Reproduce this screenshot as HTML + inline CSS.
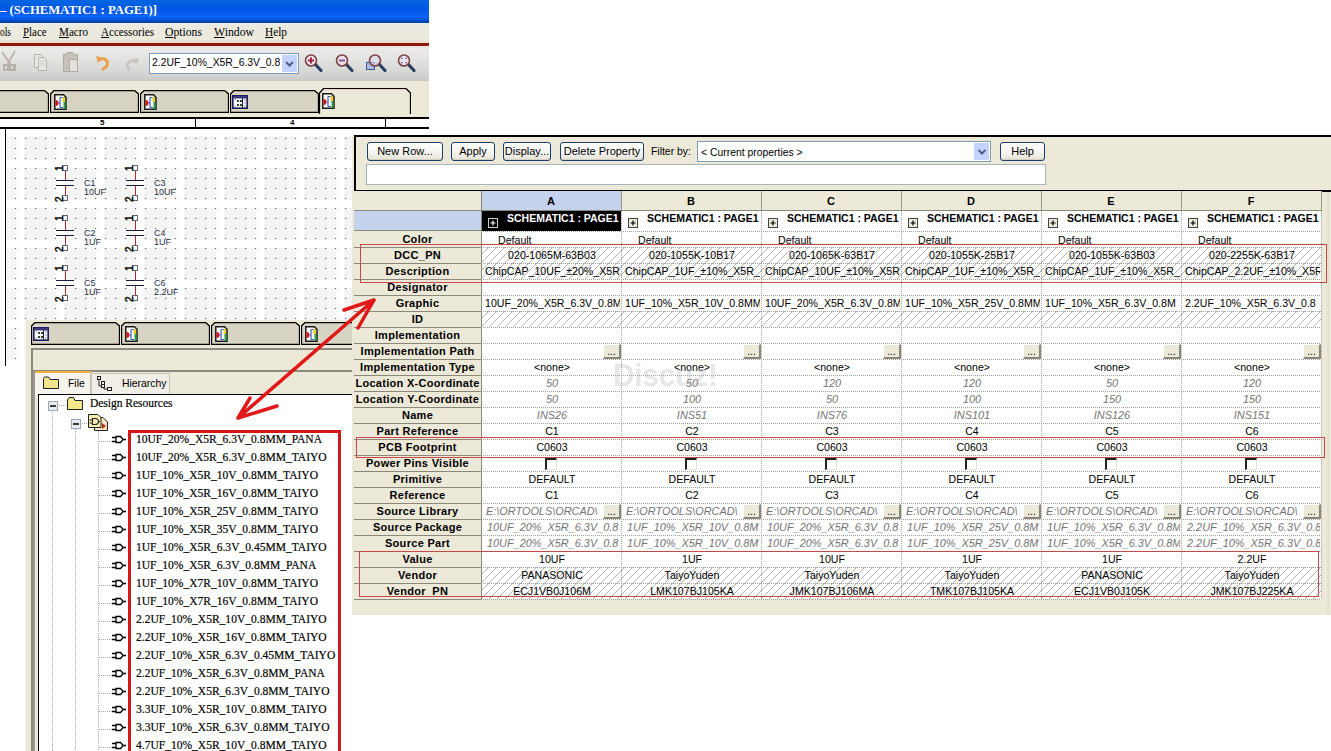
<!DOCTYPE html><html><head><meta charset="utf-8"><style>
*{margin:0;padding:0;box-sizing:border-box}
html,body{width:1331px;height:751px;overflow:hidden;background:#fff;position:relative;font-family:"Liberation Sans",sans-serif}
.ab{position:absolute}
.t{position:absolute;white-space:nowrap}
</style></head><body>

<div class="ab" style="left:0;top:0;width:429px;height:23px;background:linear-gradient(#0466e2 0%,#0055e4 45%,#0a64f8 72%,#0058e2 84%,#0046b4 94%,#003a90 100%)"></div>
<div class="t" style="left:0;top:2px;font:bold 13px 'Liberation Serif', serif;color:#fff;transform:scaleX(0.976);transform-origin:0 0">– (SCHEMATIC1 : PAGE1)]</div>
<div class="ab" style="left:0;top:23px;width:429px;height:20px;background:linear-gradient(#eef2f6 0,#eceae0 2px,#ece9dc 100%)"></div>
<div class="t" style="left:0px;top:25px;font:12px 'Liberation Serif', serif;color:#000;transform:scaleX(0.7857142857142857);transform-origin:0 0">ols</div>
<div class="t" style="left:23px;top:25px;font:12px 'Liberation Serif', serif;color:#000;transform:scaleX(0.9041939207387457);transform-origin:0 0"><u>P</u>lace</div>
<div class="t" style="left:59px;top:25px;font:12px 'Liberation Serif', serif;color:#000;transform:scaleX(0.9259259259259259);transform-origin:0 0"><u>M</u>acro</div>
<div class="t" style="left:101px;top:25px;font:12px 'Liberation Serif', serif;color:#000;transform:scaleX(0.9247949746990054);transform-origin:0 0"><u>A</u>ccessories</div>
<div class="t" style="left:165px;top:25px;font:12px 'Liberation Serif', serif;color:#000;transform:scaleX(0.9736842105263158);transform-origin:0 0"><u>O</u>ptions</div>
<div class="t" style="left:214px;top:25px;font:12px 'Liberation Serif', serif;color:#000;transform:scaleX(0.9791921664626683);transform-origin:0 0"><u>W</u>indow</div>
<div class="t" style="left:265px;top:25px;font:12px 'Liberation Serif', serif;color:#000;transform:scaleX(0.9429918559794257);transform-origin:0 0"><u>H</u>elp</div>
<div class="ab" style="left:0;top:40px;width:429px;height:3px;background:linear-gradient(#ede6dc,#f2d8d4)"></div>
<div class="ab" style="left:0;top:43px;width:429px;height:3px;background:#8a1a0c"></div>
<div class="ab" style="left:0;top:46px;width:429px;height:35px;background:linear-gradient(#f6dede 0%,#ecebea 6%,#e2e2e0 40%,#d6d6d4 75%,#c8c8c6 100%)"></div>
<div class="ab" style="left:149px;top:53px;width:150px;height:21px;background:#fff;border:1px solid #7f9db9"></div>
<div class="t" style="left:152px;top:55px;width:128px;overflow:hidden;font:10.4px/16px 'Liberation Sans', sans-serif;color:#000">2.2UF_10%_X5R_6.3V_0.8MM</div>
<div class="ab" style="left:282px;top:55px;width:15px;height:17px;background:#c3d3fd"></div>
<svg class="ab" style="left:282px;top:55px" width="15" height="17"><path d="M4 7 L7.5 10.5 L11 7" stroke="#4d6185" stroke-width="2" fill="none"/></svg>
<svg class="ab" style="left:0;top:50px" width="429" height="28"><path d="M2 2 L11 15 M15 1 L7 15" stroke="#b6b2aa" stroke-width="1.6" fill="none"/><path d="M3 14 H9 V21 H3Z M9 14 H16 V21 H9Z" fill="#b6b2aa"/><path d="M5 16 H7 V19 H5Z M11 16 H13 V19 H11Z" fill="#d8d6d0"/><path d="M34.5 4.5 H40.5 L42.5 6.5 V17.5 H34.5Z" fill="#e8e7e4" stroke="#b8b4ac"/><path d="M38.5 7.5 H44.5 L46.5 9.5 V20.5 H38.5Z" fill="#e8e7e4" stroke="#b8b4ac"/><path d="M40 11 H45 M40 13 H45 M40 15 H45" stroke="#d0cec8"/><path d="M63.5 4.5 H66 L67 2.5 H73 L74 4.5 H77.5 V21.5 H63.5Z" fill="#c6c2ba" stroke="#aeaaa2"/><path d="M69.5 9.5 H75.5 L77.5 11.5 V21.5 H69.5Z" fill="#e4e2de" stroke="#aeaaa2"/><path d="M99 10 Q104 7 107 11 Q109 16 103 19" stroke="#e8a050" stroke-width="3" fill="none" stroke-linecap="round"/><path d="M96 6 L103 8 L98 13Z" fill="#e8a050"/><path d="M136 12 Q131 9 128 13 Q126 17 129 19" stroke="#c8c6c0" stroke-width="3" fill="none" stroke-linecap="round"/><path d="M139 8 L133 9 L137 14Z" fill="#c8c6c0"/><path d="M315 14 L321 20.5" stroke="#2a4060" stroke-width="3.2" stroke-linecap="round"/><circle cx="311" cy="10.5" r="5.5" fill="#f2e6ee" stroke="#7a4444" stroke-width="1.6"/><path d="M308 10.5 H314 M311 7.5 V13.5" stroke="#a82040" stroke-width="2"/><path d="M346 14 L352 20.5" stroke="#2a4060" stroke-width="3.2" stroke-linecap="round"/><circle cx="342" cy="10.5" r="5.5" fill="#ece0ec" stroke="#7a4444" stroke-width="1.6"/><path d="M339 10.5 H345" stroke="#8a5a90" stroke-width="2"/><path d="M379 14 L385 20.5" stroke="#2a4060" stroke-width="3.2" stroke-linecap="round"/><rect x="366.5" y="12.5" width="8" height="7" fill="#a8bde0" stroke="#3a5a90"/><circle cx="375" cy="10.5" r="5.5" fill="rgba(220,220,240,0.6)" stroke="#7a4444" stroke-width="1.6"/><path d="M408 14 L414 20.5" stroke="#2a4060" stroke-width="3.2" stroke-linecap="round"/><circle cx="404" cy="10.5" r="5.5" fill="#ece2ee" stroke="#7a4444" stroke-width="1.6"/><path d="M401.5 9 V8 H402.5 M405.5 8 H406.5 V9 M406.5 12 V13 H405.5 M402.5 13 H401.5 V12" stroke="#6a5aa0" stroke-width="1"/></svg>
<div class="ab" style="left:0;top:81px;width:429px;height:36px;background:#ece9d8"></div>
<svg class="ab" style="left:-40px;top:90px" width="89" height="23"><path d="M0.5 22.5 V4 L4 0.5 H84.5 L88.5 4 V22.5Z" fill="#d8d4c4" stroke="#000" stroke-width="1.3"/></svg>
<svg class="ab" style="left:50px;top:90px" width="89" height="23"><path d="M0.5 22.5 V4 L4 0.5 H84.5 L88.5 4 V22.5Z" fill="#d8d4c4" stroke="#000" stroke-width="1.3"/></svg>
<svg class="ab" style="left:54px;top:94px" width="13" height="16"><path d="M0.8 0.8 H9.5 L12 3.3 V15.2 H0.8Z" fill="#fff" stroke="#1a1a1a" stroke-width="1.5"/><path d="M1.5 6 A3 3 0 0 1 1.5 12 Z" fill="#d81010"/><path d="M4.5 9 H6 M6 3.5 V13.5 M6 3.5 H9 M6 13.5 H9" stroke="#3a5ac8" stroke-width="1.2" fill="none"/><rect x="8.5" y="3" width="2.5" height="5" fill="#e8d020"/><rect x="9.5" y="8" width="2" height="7" fill="#20a040"/></svg>
<svg class="ab" style="left:140px;top:90px" width="89" height="23"><path d="M0.5 22.5 V4 L4 0.5 H84.5 L88.5 4 V22.5Z" fill="#d8d4c4" stroke="#000" stroke-width="1.3"/></svg>
<svg class="ab" style="left:144px;top:94px" width="13" height="16"><path d="M0.8 0.8 H9.5 L12 3.3 V15.2 H0.8Z" fill="#fff" stroke="#1a1a1a" stroke-width="1.5"/><path d="M1.5 6 A3 3 0 0 1 1.5 12 Z" fill="#d81010"/><path d="M4.5 9 H6 M6 3.5 V13.5 M6 3.5 H9 M6 13.5 H9" stroke="#3a5ac8" stroke-width="1.2" fill="none"/><rect x="8.5" y="3" width="2.5" height="5" fill="#e8d020"/><rect x="9.5" y="8" width="2" height="7" fill="#20a040"/></svg>
<svg class="ab" style="left:230px;top:90px" width="89" height="23"><path d="M0.5 22.5 V4 L4 0.5 H84.5 L88.5 4 V22.5Z" fill="#d8d4c4" stroke="#000" stroke-width="1.3"/></svg>
<svg class="ab" style="left:232px;top:95px" width="16" height="14"><rect x="0.8" y="0.8" width="14.4" height="12.4" fill="#fff" stroke="#1c1c5a" stroke-width="1.6"/><rect x="1" y="1" width="14" height="2.5" fill="#3a3a7a"/><path d="M10.5 3 V13" stroke="#1c1c5a"/><rect x="5" y="5" width="2" height="2" fill="#2a4a2a"/><rect x="5" y="9" width="2" height="2" fill="#2a4a2a"/><rect x="8" y="5" width="2" height="2" fill="#2a4a2a"/><rect x="8" y="9" width="2" height="2" fill="#2a4a2a"/><path d="M2.5 5 H4 M2.5 11 H4 M12 5 H14 M12 8 H14 M12 11 H14" stroke="#9090a0"/></svg>
<svg class="ab" style="left:319px;top:88px" width="92" height="26"><path d="M0.5 26 V5 L4.5 0.5 H87 L91.5 5 V26" fill="#ece9d8" stroke="#000" stroke-width="1.3"/><path d="M5 1.5 H87" stroke="#f4c8c0"/></svg>
<svg class="ab" style="left:322px;top:93px" width="13" height="16"><path d="M0.8 0.8 H9.5 L12 3.3 V15.2 H0.8Z" fill="#fff" stroke="#1a1a1a" stroke-width="1.5"/><path d="M1.5 6 A3 3 0 0 1 1.5 12 Z" fill="#d81010"/><path d="M4.5 9 H6 M6 3.5 V13.5 M6 3.5 H9 M6 13.5 H9" stroke="#3a5ac8" stroke-width="1.2" fill="none"/><rect x="8.5" y="3" width="2.5" height="5" fill="#e8d020"/><rect x="9.5" y="8" width="2" height="7" fill="#20a040"/></svg>
<div class="ab" style="left:0;top:117px;width:429px;height:2px;background:#000"></div>
<div class="ab" style="left:0;top:119px;width:429px;height:9px;background:#fff"></div>
<div class="ab" style="left:0;top:127px;width:429px;height:2px;background:#000"></div>
<div class="ab" style="left:195px;top:119px;width:1px;height:9px;background:#000"></div>
<div class="ab" style="left:385px;top:119px;width:1px;height:9px;background:#000"></div>
<div class="t" style="left:100px;top:118px;font:bold 8px 'Liberation Sans', sans-serif">5</div>
<div class="t" style="left:290px;top:118px;font:bold 8px 'Liberation Sans', sans-serif">4</div>
<div class="ab" style="left:5px;top:129px;width:1px;height:237px;background:#000"></div>
<svg class="ab" style="left:6px;top:129px" width="354" height="237"><defs><pattern id="jp" patternUnits="userSpaceOnUse" x="10" y="31" width="40" height="40"><rect x="8" y="8" width="32" height="32" fill="#f5f5f5"/></pattern></defs><rect x="0" y="7" width="354" height="230" fill="url(#jp)"/></svg>
<svg class="ab" style="left:0;top:0" width="360" height="370"><path d="M15 138.5h1.2M15 148.5h1.2M15 158.5h1.2M15 168.5h1.2M15 178.5h1.2M15 188.5h1.2M15 198.5h1.2M15 208.5h1.2M15 218.5h1.2M15 228.5h1.2M15 238.5h1.2M15 248.5h1.2M15 258.5h1.2M15 268.5h1.2M15 278.5h1.2M15 288.5h1.2M15 298.5h1.2M15 308.5h1.2M15 318.5h1.2M15 328.5h1.2M15 338.5h1.2M15 348.5h1.2M15 358.5h1.2M25 138.5h1.2M25 148.5h1.2M25 158.5h1.2M25 168.5h1.2M25 178.5h1.2M25 188.5h1.2M25 198.5h1.2M25 208.5h1.2M25 218.5h1.2M25 228.5h1.2M25 238.5h1.2M25 248.5h1.2M25 258.5h1.2M25 268.5h1.2M25 278.5h1.2M25 288.5h1.2M25 298.5h1.2M25 308.5h1.2M25 318.5h1.2M25 328.5h1.2M25 338.5h1.2M25 348.5h1.2M25 358.5h1.2M35 138.5h1.2M35 148.5h1.2M35 158.5h1.2M35 168.5h1.2M35 178.5h1.2M35 188.5h1.2M35 198.5h1.2M35 208.5h1.2M35 218.5h1.2M35 228.5h1.2M35 238.5h1.2M35 248.5h1.2M35 258.5h1.2M35 268.5h1.2M35 278.5h1.2M35 288.5h1.2M35 298.5h1.2M35 308.5h1.2M35 318.5h1.2M35 328.5h1.2M35 338.5h1.2M35 348.5h1.2M35 358.5h1.2M45 138.5h1.2M45 148.5h1.2M45 158.5h1.2M45 168.5h1.2M45 178.5h1.2M45 188.5h1.2M45 198.5h1.2M45 208.5h1.2M45 218.5h1.2M45 228.5h1.2M45 238.5h1.2M45 248.5h1.2M45 258.5h1.2M45 268.5h1.2M45 278.5h1.2M45 288.5h1.2M45 298.5h1.2M45 308.5h1.2M45 318.5h1.2M45 328.5h1.2M45 338.5h1.2M45 348.5h1.2M45 358.5h1.2M55 138.5h1.2M55 148.5h1.2M55 158.5h1.2M55 168.5h1.2M55 178.5h1.2M55 188.5h1.2M55 198.5h1.2M55 208.5h1.2M55 218.5h1.2M55 228.5h1.2M55 238.5h1.2M55 248.5h1.2M55 258.5h1.2M55 268.5h1.2M55 278.5h1.2M55 288.5h1.2M55 298.5h1.2M55 308.5h1.2M55 318.5h1.2M55 328.5h1.2M55 338.5h1.2M55 348.5h1.2M55 358.5h1.2M65 138.5h1.2M65 148.5h1.2M65 158.5h1.2M65 168.5h1.2M65 178.5h1.2M65 188.5h1.2M65 198.5h1.2M65 208.5h1.2M65 218.5h1.2M65 228.5h1.2M65 238.5h1.2M65 248.5h1.2M65 258.5h1.2M65 268.5h1.2M65 278.5h1.2M65 288.5h1.2M65 298.5h1.2M65 308.5h1.2M65 318.5h1.2M65 328.5h1.2M65 338.5h1.2M65 348.5h1.2M65 358.5h1.2M75 138.5h1.2M75 148.5h1.2M75 158.5h1.2M75 168.5h1.2M75 178.5h1.2M75 188.5h1.2M75 198.5h1.2M75 208.5h1.2M75 218.5h1.2M75 228.5h1.2M75 238.5h1.2M75 248.5h1.2M75 258.5h1.2M75 268.5h1.2M75 278.5h1.2M75 288.5h1.2M75 298.5h1.2M75 308.5h1.2M75 318.5h1.2M75 328.5h1.2M75 338.5h1.2M75 348.5h1.2M75 358.5h1.2M85 138.5h1.2M85 148.5h1.2M85 158.5h1.2M85 168.5h1.2M85 178.5h1.2M85 188.5h1.2M85 198.5h1.2M85 208.5h1.2M85 218.5h1.2M85 228.5h1.2M85 238.5h1.2M85 248.5h1.2M85 258.5h1.2M85 268.5h1.2M85 278.5h1.2M85 288.5h1.2M85 298.5h1.2M85 308.5h1.2M85 318.5h1.2M85 328.5h1.2M85 338.5h1.2M85 348.5h1.2M85 358.5h1.2M95 138.5h1.2M95 148.5h1.2M95 158.5h1.2M95 168.5h1.2M95 178.5h1.2M95 188.5h1.2M95 198.5h1.2M95 208.5h1.2M95 218.5h1.2M95 228.5h1.2M95 238.5h1.2M95 248.5h1.2M95 258.5h1.2M95 268.5h1.2M95 278.5h1.2M95 288.5h1.2M95 298.5h1.2M95 308.5h1.2M95 318.5h1.2M95 328.5h1.2M95 338.5h1.2M95 348.5h1.2M95 358.5h1.2M105 138.5h1.2M105 148.5h1.2M105 158.5h1.2M105 168.5h1.2M105 178.5h1.2M105 188.5h1.2M105 198.5h1.2M105 208.5h1.2M105 218.5h1.2M105 228.5h1.2M105 238.5h1.2M105 248.5h1.2M105 258.5h1.2M105 268.5h1.2M105 278.5h1.2M105 288.5h1.2M105 298.5h1.2M105 308.5h1.2M105 318.5h1.2M105 328.5h1.2M105 338.5h1.2M105 348.5h1.2M105 358.5h1.2M115 138.5h1.2M115 148.5h1.2M115 158.5h1.2M115 168.5h1.2M115 178.5h1.2M115 188.5h1.2M115 198.5h1.2M115 208.5h1.2M115 218.5h1.2M115 228.5h1.2M115 238.5h1.2M115 248.5h1.2M115 258.5h1.2M115 268.5h1.2M115 278.5h1.2M115 288.5h1.2M115 298.5h1.2M115 308.5h1.2M115 318.5h1.2M115 328.5h1.2M115 338.5h1.2M115 348.5h1.2M115 358.5h1.2M125 138.5h1.2M125 148.5h1.2M125 158.5h1.2M125 168.5h1.2M125 178.5h1.2M125 188.5h1.2M125 198.5h1.2M125 208.5h1.2M125 218.5h1.2M125 228.5h1.2M125 238.5h1.2M125 248.5h1.2M125 258.5h1.2M125 268.5h1.2M125 278.5h1.2M125 288.5h1.2M125 298.5h1.2M125 308.5h1.2M125 318.5h1.2M125 328.5h1.2M125 338.5h1.2M125 348.5h1.2M125 358.5h1.2M135 138.5h1.2M135 148.5h1.2M135 158.5h1.2M135 168.5h1.2M135 178.5h1.2M135 188.5h1.2M135 198.5h1.2M135 208.5h1.2M135 218.5h1.2M135 228.5h1.2M135 238.5h1.2M135 248.5h1.2M135 258.5h1.2M135 268.5h1.2M135 278.5h1.2M135 288.5h1.2M135 298.5h1.2M135 308.5h1.2M135 318.5h1.2M135 328.5h1.2M135 338.5h1.2M135 348.5h1.2M135 358.5h1.2M145 138.5h1.2M145 148.5h1.2M145 158.5h1.2M145 168.5h1.2M145 178.5h1.2M145 188.5h1.2M145 198.5h1.2M145 208.5h1.2M145 218.5h1.2M145 228.5h1.2M145 238.5h1.2M145 248.5h1.2M145 258.5h1.2M145 268.5h1.2M145 278.5h1.2M145 288.5h1.2M145 298.5h1.2M145 308.5h1.2M145 318.5h1.2M145 328.5h1.2M145 338.5h1.2M145 348.5h1.2M145 358.5h1.2M155 138.5h1.2M155 148.5h1.2M155 158.5h1.2M155 168.5h1.2M155 178.5h1.2M155 188.5h1.2M155 198.5h1.2M155 208.5h1.2M155 218.5h1.2M155 228.5h1.2M155 238.5h1.2M155 248.5h1.2M155 258.5h1.2M155 268.5h1.2M155 278.5h1.2M155 288.5h1.2M155 298.5h1.2M155 308.5h1.2M155 318.5h1.2M155 328.5h1.2M155 338.5h1.2M155 348.5h1.2M155 358.5h1.2M165 138.5h1.2M165 148.5h1.2M165 158.5h1.2M165 168.5h1.2M165 178.5h1.2M165 188.5h1.2M165 198.5h1.2M165 208.5h1.2M165 218.5h1.2M165 228.5h1.2M165 238.5h1.2M165 248.5h1.2M165 258.5h1.2M165 268.5h1.2M165 278.5h1.2M165 288.5h1.2M165 298.5h1.2M165 308.5h1.2M165 318.5h1.2M165 328.5h1.2M165 338.5h1.2M165 348.5h1.2M165 358.5h1.2M175 138.5h1.2M175 148.5h1.2M175 158.5h1.2M175 168.5h1.2M175 178.5h1.2M175 188.5h1.2M175 198.5h1.2M175 208.5h1.2M175 218.5h1.2M175 228.5h1.2M175 238.5h1.2M175 248.5h1.2M175 258.5h1.2M175 268.5h1.2M175 278.5h1.2M175 288.5h1.2M175 298.5h1.2M175 308.5h1.2M175 318.5h1.2M175 328.5h1.2M175 338.5h1.2M175 348.5h1.2M175 358.5h1.2M185 138.5h1.2M185 148.5h1.2M185 158.5h1.2M185 168.5h1.2M185 178.5h1.2M185 188.5h1.2M185 198.5h1.2M185 208.5h1.2M185 218.5h1.2M185 228.5h1.2M185 238.5h1.2M185 248.5h1.2M185 258.5h1.2M185 268.5h1.2M185 278.5h1.2M185 288.5h1.2M185 298.5h1.2M185 308.5h1.2M185 318.5h1.2M185 328.5h1.2M185 338.5h1.2M185 348.5h1.2M185 358.5h1.2M195 138.5h1.2M195 148.5h1.2M195 158.5h1.2M195 168.5h1.2M195 178.5h1.2M195 188.5h1.2M195 198.5h1.2M195 208.5h1.2M195 218.5h1.2M195 228.5h1.2M195 238.5h1.2M195 248.5h1.2M195 258.5h1.2M195 268.5h1.2M195 278.5h1.2M195 288.5h1.2M195 298.5h1.2M195 308.5h1.2M195 318.5h1.2M195 328.5h1.2M195 338.5h1.2M195 348.5h1.2M195 358.5h1.2M205 138.5h1.2M205 148.5h1.2M205 158.5h1.2M205 168.5h1.2M205 178.5h1.2M205 188.5h1.2M205 198.5h1.2M205 208.5h1.2M205 218.5h1.2M205 228.5h1.2M205 238.5h1.2M205 248.5h1.2M205 258.5h1.2M205 268.5h1.2M205 278.5h1.2M205 288.5h1.2M205 298.5h1.2M205 308.5h1.2M205 318.5h1.2M205 328.5h1.2M205 338.5h1.2M205 348.5h1.2M205 358.5h1.2M215 138.5h1.2M215 148.5h1.2M215 158.5h1.2M215 168.5h1.2M215 178.5h1.2M215 188.5h1.2M215 198.5h1.2M215 208.5h1.2M215 218.5h1.2M215 228.5h1.2M215 238.5h1.2M215 248.5h1.2M215 258.5h1.2M215 268.5h1.2M215 278.5h1.2M215 288.5h1.2M215 298.5h1.2M215 308.5h1.2M215 318.5h1.2M215 328.5h1.2M215 338.5h1.2M215 348.5h1.2M215 358.5h1.2M225 138.5h1.2M225 148.5h1.2M225 158.5h1.2M225 168.5h1.2M225 178.5h1.2M225 188.5h1.2M225 198.5h1.2M225 208.5h1.2M225 218.5h1.2M225 228.5h1.2M225 238.5h1.2M225 248.5h1.2M225 258.5h1.2M225 268.5h1.2M225 278.5h1.2M225 288.5h1.2M225 298.5h1.2M225 308.5h1.2M225 318.5h1.2M225 328.5h1.2M225 338.5h1.2M225 348.5h1.2M225 358.5h1.2M235 138.5h1.2M235 148.5h1.2M235 158.5h1.2M235 168.5h1.2M235 178.5h1.2M235 188.5h1.2M235 198.5h1.2M235 208.5h1.2M235 218.5h1.2M235 228.5h1.2M235 238.5h1.2M235 248.5h1.2M235 258.5h1.2M235 268.5h1.2M235 278.5h1.2M235 288.5h1.2M235 298.5h1.2M235 308.5h1.2M235 318.5h1.2M235 328.5h1.2M235 338.5h1.2M235 348.5h1.2M235 358.5h1.2M245 138.5h1.2M245 148.5h1.2M245 158.5h1.2M245 168.5h1.2M245 178.5h1.2M245 188.5h1.2M245 198.5h1.2M245 208.5h1.2M245 218.5h1.2M245 228.5h1.2M245 238.5h1.2M245 248.5h1.2M245 258.5h1.2M245 268.5h1.2M245 278.5h1.2M245 288.5h1.2M245 298.5h1.2M245 308.5h1.2M245 318.5h1.2M245 328.5h1.2M245 338.5h1.2M245 348.5h1.2M245 358.5h1.2M255 138.5h1.2M255 148.5h1.2M255 158.5h1.2M255 168.5h1.2M255 178.5h1.2M255 188.5h1.2M255 198.5h1.2M255 208.5h1.2M255 218.5h1.2M255 228.5h1.2M255 238.5h1.2M255 248.5h1.2M255 258.5h1.2M255 268.5h1.2M255 278.5h1.2M255 288.5h1.2M255 298.5h1.2M255 308.5h1.2M255 318.5h1.2M255 328.5h1.2M255 338.5h1.2M255 348.5h1.2M255 358.5h1.2M265 138.5h1.2M265 148.5h1.2M265 158.5h1.2M265 168.5h1.2M265 178.5h1.2M265 188.5h1.2M265 198.5h1.2M265 208.5h1.2M265 218.5h1.2M265 228.5h1.2M265 238.5h1.2M265 248.5h1.2M265 258.5h1.2M265 268.5h1.2M265 278.5h1.2M265 288.5h1.2M265 298.5h1.2M265 308.5h1.2M265 318.5h1.2M265 328.5h1.2M265 338.5h1.2M265 348.5h1.2M265 358.5h1.2M275 138.5h1.2M275 148.5h1.2M275 158.5h1.2M275 168.5h1.2M275 178.5h1.2M275 188.5h1.2M275 198.5h1.2M275 208.5h1.2M275 218.5h1.2M275 228.5h1.2M275 238.5h1.2M275 248.5h1.2M275 258.5h1.2M275 268.5h1.2M275 278.5h1.2M275 288.5h1.2M275 298.5h1.2M275 308.5h1.2M275 318.5h1.2M275 328.5h1.2M275 338.5h1.2M275 348.5h1.2M275 358.5h1.2M285 138.5h1.2M285 148.5h1.2M285 158.5h1.2M285 168.5h1.2M285 178.5h1.2M285 188.5h1.2M285 198.5h1.2M285 208.5h1.2M285 218.5h1.2M285 228.5h1.2M285 238.5h1.2M285 248.5h1.2M285 258.5h1.2M285 268.5h1.2M285 278.5h1.2M285 288.5h1.2M285 298.5h1.2M285 308.5h1.2M285 318.5h1.2M285 328.5h1.2M285 338.5h1.2M285 348.5h1.2M285 358.5h1.2M295 138.5h1.2M295 148.5h1.2M295 158.5h1.2M295 168.5h1.2M295 178.5h1.2M295 188.5h1.2M295 198.5h1.2M295 208.5h1.2M295 218.5h1.2M295 228.5h1.2M295 238.5h1.2M295 248.5h1.2M295 258.5h1.2M295 268.5h1.2M295 278.5h1.2M295 288.5h1.2M295 298.5h1.2M295 308.5h1.2M295 318.5h1.2M295 328.5h1.2M295 338.5h1.2M295 348.5h1.2M295 358.5h1.2M305 138.5h1.2M305 148.5h1.2M305 158.5h1.2M305 168.5h1.2M305 178.5h1.2M305 188.5h1.2M305 198.5h1.2M305 208.5h1.2M305 218.5h1.2M305 228.5h1.2M305 238.5h1.2M305 248.5h1.2M305 258.5h1.2M305 268.5h1.2M305 278.5h1.2M305 288.5h1.2M305 298.5h1.2M305 308.5h1.2M305 318.5h1.2M305 328.5h1.2M305 338.5h1.2M305 348.5h1.2M305 358.5h1.2M315 138.5h1.2M315 148.5h1.2M315 158.5h1.2M315 168.5h1.2M315 178.5h1.2M315 188.5h1.2M315 198.5h1.2M315 208.5h1.2M315 218.5h1.2M315 228.5h1.2M315 238.5h1.2M315 248.5h1.2M315 258.5h1.2M315 268.5h1.2M315 278.5h1.2M315 288.5h1.2M315 298.5h1.2M315 308.5h1.2M315 318.5h1.2M315 328.5h1.2M315 338.5h1.2M315 348.5h1.2M315 358.5h1.2M325 138.5h1.2M325 148.5h1.2M325 158.5h1.2M325 168.5h1.2M325 178.5h1.2M325 188.5h1.2M325 198.5h1.2M325 208.5h1.2M325 218.5h1.2M325 228.5h1.2M325 238.5h1.2M325 248.5h1.2M325 258.5h1.2M325 268.5h1.2M325 278.5h1.2M325 288.5h1.2M325 298.5h1.2M325 308.5h1.2M325 318.5h1.2M325 328.5h1.2M325 338.5h1.2M325 348.5h1.2M325 358.5h1.2M335 138.5h1.2M335 148.5h1.2M335 158.5h1.2M335 168.5h1.2M335 178.5h1.2M335 188.5h1.2M335 198.5h1.2M335 208.5h1.2M335 218.5h1.2M335 228.5h1.2M335 238.5h1.2M335 248.5h1.2M335 258.5h1.2M335 268.5h1.2M335 278.5h1.2M335 288.5h1.2M335 298.5h1.2M335 308.5h1.2M335 318.5h1.2M335 328.5h1.2M335 338.5h1.2M335 348.5h1.2M335 358.5h1.2M345 138.5h1.2M345 148.5h1.2M345 158.5h1.2M345 168.5h1.2M345 178.5h1.2M345 188.5h1.2M345 198.5h1.2M345 208.5h1.2M345 218.5h1.2M345 228.5h1.2M345 238.5h1.2M345 248.5h1.2M345 258.5h1.2M345 268.5h1.2M345 278.5h1.2M345 288.5h1.2M345 298.5h1.2M345 308.5h1.2M345 318.5h1.2M345 328.5h1.2M345 338.5h1.2M345 348.5h1.2M345 358.5h1.2" stroke="#555" stroke-width="1.1"/></svg>
<svg class="ab" style="left:0px;top:0px" width="110" height="210"><rect x="62.5" y="165.5" width="5" height="5" fill="#fff" stroke="#666"/><path d="M65.5 171 V180 M65.5 186 V195" stroke="#a03030"/><path d="M56 180.5 H74 M56 185.5 H74" stroke="#1a1a3a" stroke-width="1.2"/><rect x="62.5" y="195.5" width="5" height="5" fill="#fff" stroke="#666"/><text transform="translate(62.5 171) rotate(-90)" font-family="Liberation Sans" font-size="10" fill="#111" stroke="#111" stroke-width="0.5">1</text><text transform="translate(62.5 202) rotate(-90)" font-family="Liberation Sans" font-size="10" fill="#111" stroke="#111" stroke-width="0.5">2</text></svg><div class="t" style="left:84px;top:178.7px;font:9px/9px 'Liberation Sans', sans-serif;color:#283048">C1</div><div class="t" style="left:84px;top:188.1px;font:9px/9px 'Liberation Sans', sans-serif;color:#283048">10UF</div>
<svg class="ab" style="left:70px;top:0px" width="110" height="210"><rect x="62.5" y="165.5" width="5" height="5" fill="#fff" stroke="#666"/><path d="M65.5 171 V180 M65.5 186 V195" stroke="#a03030"/><path d="M56 180.5 H74 M56 185.5 H74" stroke="#1a1a3a" stroke-width="1.2"/><rect x="62.5" y="195.5" width="5" height="5" fill="#fff" stroke="#666"/><text transform="translate(62.5 171) rotate(-90)" font-family="Liberation Sans" font-size="10" fill="#111" stroke="#111" stroke-width="0.5">1</text><text transform="translate(62.5 202) rotate(-90)" font-family="Liberation Sans" font-size="10" fill="#111" stroke="#111" stroke-width="0.5">2</text></svg><div class="t" style="left:154px;top:178.7px;font:9px/9px 'Liberation Sans', sans-serif;color:#283048">C3</div><div class="t" style="left:154px;top:188.1px;font:9px/9px 'Liberation Sans', sans-serif;color:#283048">10UF</div>
<svg class="ab" style="left:0px;top:50px" width="110" height="210"><rect x="62.5" y="165.5" width="5" height="5" fill="#fff" stroke="#666"/><path d="M65.5 171 V180 M65.5 186 V195" stroke="#a03030"/><path d="M56 180.5 H74 M56 185.5 H74" stroke="#1a1a3a" stroke-width="1.2"/><rect x="62.5" y="195.5" width="5" height="5" fill="#fff" stroke="#666"/><text transform="translate(62.5 171) rotate(-90)" font-family="Liberation Sans" font-size="10" fill="#111" stroke="#111" stroke-width="0.5">1</text><text transform="translate(62.5 202) rotate(-90)" font-family="Liberation Sans" font-size="10" fill="#111" stroke="#111" stroke-width="0.5">2</text></svg><div class="t" style="left:84px;top:228.7px;font:9px/9px 'Liberation Sans', sans-serif;color:#283048">C2</div><div class="t" style="left:84px;top:238.1px;font:9px/9px 'Liberation Sans', sans-serif;color:#283048">1UF</div>
<svg class="ab" style="left:70px;top:50px" width="110" height="210"><rect x="62.5" y="165.5" width="5" height="5" fill="#fff" stroke="#666"/><path d="M65.5 171 V180 M65.5 186 V195" stroke="#a03030"/><path d="M56 180.5 H74 M56 185.5 H74" stroke="#1a1a3a" stroke-width="1.2"/><rect x="62.5" y="195.5" width="5" height="5" fill="#fff" stroke="#666"/><text transform="translate(62.5 171) rotate(-90)" font-family="Liberation Sans" font-size="10" fill="#111" stroke="#111" stroke-width="0.5">1</text><text transform="translate(62.5 202) rotate(-90)" font-family="Liberation Sans" font-size="10" fill="#111" stroke="#111" stroke-width="0.5">2</text></svg><div class="t" style="left:154px;top:228.7px;font:9px/9px 'Liberation Sans', sans-serif;color:#283048">C4</div><div class="t" style="left:154px;top:238.1px;font:9px/9px 'Liberation Sans', sans-serif;color:#283048">1UF</div>
<svg class="ab" style="left:0px;top:100px" width="110" height="210"><rect x="62.5" y="165.5" width="5" height="5" fill="#fff" stroke="#666"/><path d="M65.5 171 V180 M65.5 186 V195" stroke="#a03030"/><path d="M56 180.5 H74 M56 185.5 H74" stroke="#1a1a3a" stroke-width="1.2"/><rect x="62.5" y="195.5" width="5" height="5" fill="#fff" stroke="#666"/><text transform="translate(62.5 171) rotate(-90)" font-family="Liberation Sans" font-size="10" fill="#111" stroke="#111" stroke-width="0.5">1</text><text transform="translate(62.5 202) rotate(-90)" font-family="Liberation Sans" font-size="10" fill="#111" stroke="#111" stroke-width="0.5">2</text></svg><div class="t" style="left:84px;top:278.7px;font:9px/9px 'Liberation Sans', sans-serif;color:#283048">C5</div><div class="t" style="left:84px;top:288.1px;font:9px/9px 'Liberation Sans', sans-serif;color:#283048">1UF</div>
<svg class="ab" style="left:70px;top:100px" width="110" height="210"><rect x="62.5" y="165.5" width="5" height="5" fill="#fff" stroke="#666"/><path d="M65.5 171 V180 M65.5 186 V195" stroke="#a03030"/><path d="M56 180.5 H74 M56 185.5 H74" stroke="#1a1a3a" stroke-width="1.2"/><rect x="62.5" y="195.5" width="5" height="5" fill="#fff" stroke="#666"/><text transform="translate(62.5 171) rotate(-90)" font-family="Liberation Sans" font-size="10" fill="#111" stroke="#111" stroke-width="0.5">1</text><text transform="translate(62.5 202) rotate(-90)" font-family="Liberation Sans" font-size="10" fill="#111" stroke="#111" stroke-width="0.5">2</text></svg><div class="t" style="left:154px;top:278.7px;font:9px/9px 'Liberation Sans', sans-serif;color:#283048">C6</div><div class="t" style="left:154px;top:288.1px;font:9px/9px 'Liberation Sans', sans-serif;color:#283048">2.2UF</div>
<div class="ab" style="left:25px;top:320px;width:327px;height:431px;background:#ece9d8"></div>
<div class="ab" style="left:25px;top:320px;width:1px;height:431px;background:#f6f4ee"></div>
<svg class="ab" style="left:31px;top:322px" width="89" height="23"><path d="M0.5 22.5 V4 L4 0.5 H84.5 L88.5 4 V22.5Z" fill="#d8d4c4" stroke="#000" stroke-width="1.3"/></svg>
<svg class="ab" style="left:33px;top:327px" width="16" height="14"><rect x="0.8" y="0.8" width="14.4" height="12.4" fill="#fff" stroke="#1c1c5a" stroke-width="1.6"/><rect x="1" y="1" width="14" height="2.5" fill="#3a3a7a"/><path d="M10.5 3 V13" stroke="#1c1c5a"/><rect x="5" y="5" width="2" height="2" fill="#2a4a2a"/><rect x="5" y="9" width="2" height="2" fill="#2a4a2a"/><rect x="8" y="5" width="2" height="2" fill="#2a4a2a"/><rect x="8" y="9" width="2" height="2" fill="#2a4a2a"/><path d="M2.5 5 H4 M2.5 11 H4 M12 5 H14 M12 8 H14 M12 11 H14" stroke="#9090a0"/></svg>
<svg class="ab" style="left:121px;top:322px" width="89" height="23"><path d="M0.5 22.5 V4 L4 0.5 H84.5 L88.5 4 V22.5Z" fill="#d8d4c4" stroke="#000" stroke-width="1.3"/></svg>
<svg class="ab" style="left:125px;top:326px" width="13" height="16"><path d="M0.8 0.8 H9.5 L12 3.3 V15.2 H0.8Z" fill="#fff" stroke="#1a1a1a" stroke-width="1.5"/><path d="M1.5 6 A3 3 0 0 1 1.5 12 Z" fill="#d81010"/><path d="M4.5 9 H6 M6 3.5 V13.5 M6 3.5 H9 M6 13.5 H9" stroke="#3a5ac8" stroke-width="1.2" fill="none"/><rect x="8.5" y="3" width="2.5" height="5" fill="#e8d020"/><rect x="9.5" y="8" width="2" height="7" fill="#20a040"/></svg>
<svg class="ab" style="left:211px;top:322px" width="89" height="23"><path d="M0.5 22.5 V4 L4 0.5 H84.5 L88.5 4 V22.5Z" fill="#d8d4c4" stroke="#000" stroke-width="1.3"/></svg>
<svg class="ab" style="left:215px;top:326px" width="13" height="16"><path d="M0.8 0.8 H9.5 L12 3.3 V15.2 H0.8Z" fill="#fff" stroke="#1a1a1a" stroke-width="1.5"/><path d="M1.5 6 A3 3 0 0 1 1.5 12 Z" fill="#d81010"/><path d="M4.5 9 H6 M6 3.5 V13.5 M6 3.5 H9 M6 13.5 H9" stroke="#3a5ac8" stroke-width="1.2" fill="none"/><rect x="8.5" y="3" width="2.5" height="5" fill="#e8d020"/><rect x="9.5" y="8" width="2" height="7" fill="#20a040"/></svg>
<svg class="ab" style="left:301px;top:322px" width="89" height="23"><path d="M0.5 22.5 V4 L4 0.5 H84.5 L88.5 4 V22.5Z" fill="#d8d4c4" stroke="#000" stroke-width="1.3"/></svg>
<svg class="ab" style="left:305px;top:326px" width="13" height="16"><path d="M0.8 0.8 H9.5 L12 3.3 V15.2 H0.8Z" fill="#fff" stroke="#1a1a1a" stroke-width="1.5"/><path d="M1.5 6 A3 3 0 0 1 1.5 12 Z" fill="#d81010"/><path d="M4.5 9 H6 M6 3.5 V13.5 M6 3.5 H9 M6 13.5 H9" stroke="#3a5ac8" stroke-width="1.2" fill="none"/><rect x="8.5" y="3" width="2.5" height="5" fill="#e8d020"/><rect x="9.5" y="8" width="2" height="7" fill="#20a040"/></svg>
<div class="ab" style="left:31px;top:348px;width:321px;height:403px;border-top:2px solid #8c8a80;border-left:2px solid #8c8a80;background:#ece9d8"></div>
<div class="ab" style="left:33px;top:370px;width:319px;height:2px;background:#8c8a80"></div><div class="ab" style="left:33px;top:372px;width:2px;height:379px;background:#9c9a90"></div>
<div class="ab" style="left:35px;top:371px;width:56px;height:24px;background:#f6f4ec;border-top:2px solid #f0b040;border-right:1px solid #c8c4b4"></div>
<svg class="ab" style="left:43px;top:376px" width="17" height="14"><path d="M0.5 2.5 V12.5 H15.5 V3.5 H7 L5.5 1 H1.5Z" fill="#f2e48c" stroke="#222"/></svg>
<div class="t" style="left:68px;top:376px;font:10.4px/16px 'Liberation Sans', sans-serif;color:#000">File</div>
<div class="ab" style="left:91px;top:373px;width:79px;height:22px;background:#f0eee6;border:1px solid #c8c4b4;border-bottom:none"></div>
<svg class="ab" style="left:96px;top:376px" width="17" height="15"><rect x="1.5" y="0.5" width="3" height="3" fill="none" stroke="#222"/><rect x="5.5" y="5.5" width="3" height="3" fill="none" stroke="#222"/><rect x="5.5" y="8.5" width="3" height="3" fill="none" stroke="#222"/><rect x="11.5" y="11.5" width="4" height="3" fill="none" stroke="#222"/><path d="M3 4 V10 H5 M8 12 V13 H11" stroke="#222" fill="none"/></svg>
<div class="t" style="left:122px;top:376px;font:10.4px/16px 'Liberation Sans', sans-serif;color:#000">Hierarchy</div>
<div class="ab" style="left:38px;top:394px;width:314px;height:357px;background:#fff;border-top:1px solid #000;border-left:1px solid #000"></div>
<svg class="ab" style="left:0;top:0" width="360" height="751"><path d="M52.5 410 V751 M75.5 429 V751 M98.5 431 V751" stroke="#a8a8a8" stroke-dasharray="1 1"/><path d="M57 405.5 H66 M80 423.5 H88" stroke="#a8a8a8" stroke-dasharray="1 1"/><path d="M99 441.5 H112" stroke="#a8a8a8" stroke-dasharray="1 1"/><path d="M99 459.5 H112" stroke="#a8a8a8" stroke-dasharray="1 1"/><path d="M99 477.5 H112" stroke="#a8a8a8" stroke-dasharray="1 1"/><path d="M99 495.5 H112" stroke="#a8a8a8" stroke-dasharray="1 1"/><path d="M99 513.5 H112" stroke="#a8a8a8" stroke-dasharray="1 1"/><path d="M99 531.5 H112" stroke="#a8a8a8" stroke-dasharray="1 1"/><path d="M99 549.5 H112" stroke="#a8a8a8" stroke-dasharray="1 1"/><path d="M99 567.5 H112" stroke="#a8a8a8" stroke-dasharray="1 1"/><path d="M99 585.5 H112" stroke="#a8a8a8" stroke-dasharray="1 1"/><path d="M99 603.5 H112" stroke="#a8a8a8" stroke-dasharray="1 1"/><path d="M99 621.5 H112" stroke="#a8a8a8" stroke-dasharray="1 1"/><path d="M99 639.5 H112" stroke="#a8a8a8" stroke-dasharray="1 1"/><path d="M99 657.5 H112" stroke="#a8a8a8" stroke-dasharray="1 1"/><path d="M99 675.5 H112" stroke="#a8a8a8" stroke-dasharray="1 1"/><path d="M99 693.5 H112" stroke="#a8a8a8" stroke-dasharray="1 1"/><path d="M99 711.5 H112" stroke="#a8a8a8" stroke-dasharray="1 1"/><path d="M99 729.5 H112" stroke="#a8a8a8" stroke-dasharray="1 1"/><path d="M99 747.5 H112" stroke="#a8a8a8" stroke-dasharray="1 1"/></svg>
<svg class="ab" style="left:48px;top:401px" width="10" height="10"><rect x="0.5" y="0.5" width="9" height="9" fill="#e8ecf0" stroke="#9aa8b4"/><path d="M2 5 H8" stroke="#000" stroke-width="1.5"/></svg>
<svg class="ab" style="left:71px;top:419px" width="10" height="10"><rect x="0.5" y="0.5" width="9" height="9" fill="#e8ecf0" stroke="#9aa8b4"/><path d="M2 5 H8" stroke="#000" stroke-width="1.5"/></svg>
<svg class="ab" style="left:67px;top:397px" width="16" height="13"><path d="M0.5 3 V12.5 H15.5 V3.5 H8 L6.5 0.5 H2Z" fill="#f4e88c" stroke="#222"/></svg>
<div class="t" style="left:89.5px;top:395px;font:13px 'Liberation Serif', serif;color:#000;-webkit-text-stroke:0.2px #000;transform:scaleX(0.882);transform-origin:0 0">Design Resources</div>
<svg class="ab" style="left:88px;top:414px" width="20" height="17"><path d="M6.5 3.5 H15 L19.5 8 V16.5 H6.5Z" fill="#f6e8c0" stroke="#222"/><path d="M0.5 0.5 H10 L13 3.5 V13.5 H0.5Z" fill="#f4ecb0" stroke="#222"/><path d="M4.5 4.5 H7 Q10.5 4.5 10.5 7.5 Q10.5 10.5 7 10.5 H4.5Z M1.5 6 H4.5 M1.5 9 H4.5 M10.5 7.5 H12" stroke="#222" fill="none" stroke-width="1.1"/><path d="M14 9 L18 12 L14 15Z" fill="#b83010"/></svg>
<svg class="ab" style="left:0;top:0" width="360" height="751"><path d="M112 437.5 H116 M112 441.5 H116 M116 436.5 V442.5 H120.5 L123.2 439.5 L120.5 436.5Z M123 439.5 H126" stroke="#000" stroke-width="1.3" fill="#fff"/><path d="M112 455.5 H116 M112 459.5 H116 M116 454.5 V460.5 H120.5 L123.2 457.5 L120.5 454.5Z M123 457.5 H126" stroke="#000" stroke-width="1.3" fill="#fff"/><path d="M112 473.5 H116 M112 477.5 H116 M116 472.5 V478.5 H120.5 L123.2 475.5 L120.5 472.5Z M123 475.5 H126" stroke="#000" stroke-width="1.3" fill="#fff"/><path d="M112 491.5 H116 M112 495.5 H116 M116 490.5 V496.5 H120.5 L123.2 493.5 L120.5 490.5Z M123 493.5 H126" stroke="#000" stroke-width="1.3" fill="#fff"/><path d="M112 509.5 H116 M112 513.5 H116 M116 508.5 V514.5 H120.5 L123.2 511.5 L120.5 508.5Z M123 511.5 H126" stroke="#000" stroke-width="1.3" fill="#fff"/><path d="M112 527.5 H116 M112 531.5 H116 M116 526.5 V532.5 H120.5 L123.2 529.5 L120.5 526.5Z M123 529.5 H126" stroke="#000" stroke-width="1.3" fill="#fff"/><path d="M112 545.5 H116 M112 549.5 H116 M116 544.5 V550.5 H120.5 L123.2 547.5 L120.5 544.5Z M123 547.5 H126" stroke="#000" stroke-width="1.3" fill="#fff"/><path d="M112 563.5 H116 M112 567.5 H116 M116 562.5 V568.5 H120.5 L123.2 565.5 L120.5 562.5Z M123 565.5 H126" stroke="#000" stroke-width="1.3" fill="#fff"/><path d="M112 581.5 H116 M112 585.5 H116 M116 580.5 V586.5 H120.5 L123.2 583.5 L120.5 580.5Z M123 583.5 H126" stroke="#000" stroke-width="1.3" fill="#fff"/><path d="M112 599.5 H116 M112 603.5 H116 M116 598.5 V604.5 H120.5 L123.2 601.5 L120.5 598.5Z M123 601.5 H126" stroke="#000" stroke-width="1.3" fill="#fff"/><path d="M112 617.5 H116 M112 621.5 H116 M116 616.5 V622.5 H120.5 L123.2 619.5 L120.5 616.5Z M123 619.5 H126" stroke="#000" stroke-width="1.3" fill="#fff"/><path d="M112 635.5 H116 M112 639.5 H116 M116 634.5 V640.5 H120.5 L123.2 637.5 L120.5 634.5Z M123 637.5 H126" stroke="#000" stroke-width="1.3" fill="#fff"/><path d="M112 653.5 H116 M112 657.5 H116 M116 652.5 V658.5 H120.5 L123.2 655.5 L120.5 652.5Z M123 655.5 H126" stroke="#000" stroke-width="1.3" fill="#fff"/><path d="M112 671.5 H116 M112 675.5 H116 M116 670.5 V676.5 H120.5 L123.2 673.5 L120.5 670.5Z M123 673.5 H126" stroke="#000" stroke-width="1.3" fill="#fff"/><path d="M112 689.5 H116 M112 693.5 H116 M116 688.5 V694.5 H120.5 L123.2 691.5 L120.5 688.5Z M123 691.5 H126" stroke="#000" stroke-width="1.3" fill="#fff"/><path d="M112 707.5 H116 M112 711.5 H116 M116 706.5 V712.5 H120.5 L123.2 709.5 L120.5 706.5Z M123 709.5 H126" stroke="#000" stroke-width="1.3" fill="#fff"/><path d="M112 725.5 H116 M112 729.5 H116 M116 724.5 V730.5 H120.5 L123.2 727.5 L120.5 724.5Z M123 727.5 H126" stroke="#000" stroke-width="1.3" fill="#fff"/><path d="M112 743.5 H116 M112 747.5 H116 M116 742.5 V748.5 H120.5 L123.2 745.5 L120.5 742.5Z M123 745.5 H126" stroke="#000" stroke-width="1.3" fill="#fff"/></svg>
<div class="t" style="left:136px;top:431px;font:13px 'Liberation Serif', serif;color:#000;-webkit-text-stroke:0.2px #000;transform:scaleX(0.887);transform-origin:0 0">10UF_20%_X5R_6.3V_0.8MM_PANA</div>
<div class="t" style="left:136px;top:449px;font:13px 'Liberation Serif', serif;color:#000;-webkit-text-stroke:0.2px #000;transform:scaleX(0.887);transform-origin:0 0">10UF_20%_X5R_6.3V_0.8MM_TAIYO</div>
<div class="t" style="left:136px;top:467px;font:13px 'Liberation Serif', serif;color:#000;-webkit-text-stroke:0.2px #000;transform:scaleX(0.887);transform-origin:0 0">1UF_10%_X5R_10V_0.8MM_TAIYO</div>
<div class="t" style="left:136px;top:485px;font:13px 'Liberation Serif', serif;color:#000;-webkit-text-stroke:0.2px #000;transform:scaleX(0.887);transform-origin:0 0">1UF_10%_X5R_16V_0.8MM_TAIYO</div>
<div class="t" style="left:136px;top:503px;font:13px 'Liberation Serif', serif;color:#000;-webkit-text-stroke:0.2px #000;transform:scaleX(0.887);transform-origin:0 0">1UF_10%_X5R_25V_0.8MM_TAIYO</div>
<div class="t" style="left:136px;top:521px;font:13px 'Liberation Serif', serif;color:#000;-webkit-text-stroke:0.2px #000;transform:scaleX(0.887);transform-origin:0 0">1UF_10%_X5R_35V_0.8MM_TAIYO</div>
<div class="t" style="left:136px;top:539px;font:13px 'Liberation Serif', serif;color:#000;-webkit-text-stroke:0.2px #000;transform:scaleX(0.887);transform-origin:0 0">1UF_10%_X5R_6.3V_0.45MM_TAIYO</div>
<div class="t" style="left:136px;top:557px;font:13px 'Liberation Serif', serif;color:#000;-webkit-text-stroke:0.2px #000;transform:scaleX(0.887);transform-origin:0 0">1UF_10%_X5R_6.3V_0.8MM_PANA</div>
<div class="t" style="left:136px;top:575px;font:13px 'Liberation Serif', serif;color:#000;-webkit-text-stroke:0.2px #000;transform:scaleX(0.887);transform-origin:0 0">1UF_10%_X7R_10V_0.8MM_TAIYO</div>
<div class="t" style="left:136px;top:593px;font:13px 'Liberation Serif', serif;color:#000;-webkit-text-stroke:0.2px #000;transform:scaleX(0.887);transform-origin:0 0">1UF_10%_X7R_16V_0.8MM_TAIYO</div>
<div class="t" style="left:136px;top:611px;font:13px 'Liberation Serif', serif;color:#000;-webkit-text-stroke:0.2px #000;transform:scaleX(0.887);transform-origin:0 0">2.2UF_10%_X5R_10V_0.8MM_TAIYO</div>
<div class="t" style="left:136px;top:629px;font:13px 'Liberation Serif', serif;color:#000;-webkit-text-stroke:0.2px #000;transform:scaleX(0.887);transform-origin:0 0">2.2UF_10%_X5R_16V_0.8MM_TAIYO</div>
<div class="t" style="left:136px;top:647px;font:13px 'Liberation Serif', serif;color:#000;-webkit-text-stroke:0.2px #000;transform:scaleX(0.887);transform-origin:0 0">2.2UF_10%_X5R_6.3V_0.45MM_TAIYO</div>
<div class="t" style="left:136px;top:665px;font:13px 'Liberation Serif', serif;color:#000;-webkit-text-stroke:0.2px #000;transform:scaleX(0.887);transform-origin:0 0">2.2UF_10%_X5R_6.3V_0.8MM_PANA</div>
<div class="t" style="left:136px;top:683px;font:13px 'Liberation Serif', serif;color:#000;-webkit-text-stroke:0.2px #000;transform:scaleX(0.887);transform-origin:0 0">2.2UF_10%_X5R_6.3V_0.8MM_TAIYO</div>
<div class="t" style="left:136px;top:701px;font:13px 'Liberation Serif', serif;color:#000;-webkit-text-stroke:0.2px #000;transform:scaleX(0.887);transform-origin:0 0">3.3UF_10%_X5R_10V_0.8MM_TAIYO</div>
<div class="t" style="left:136px;top:719px;font:13px 'Liberation Serif', serif;color:#000;-webkit-text-stroke:0.2px #000;transform:scaleX(0.887);transform-origin:0 0">3.3UF_10%_X5R_6.3V_0.8MM_TAIYO</div>
<div class="t" style="left:136px;top:737px;font:13px 'Liberation Serif', serif;color:#000;-webkit-text-stroke:0.2px #000;transform:scaleX(0.887);transform-origin:0 0">4.7UF_10%_X5R_10V_0.8MM_TAIYO</div>
<div class="ab" style="left:128px;top:430px;width:213px;height:340px;border:3px solid #d41818"></div>
<div class="ab" style="left:352px;top:135px;width:979px;height:480px;background:#ece9d8"></div>
<div class="ab" style="left:1326px;top:191px;width:3px;height:424px;background:linear-gradient(90deg,#ece9d8,#e0ddd0)"></div>
<div class="ab" style="left:354px;top:135px;width:977px;height:57px;border-top:2px solid #000;border-left:2px solid #000;border-bottom:2px solid #000"></div>
<div class="ab" style="left:367px;top:142px;width:76px;height:19px;border:1px solid #1c3c6c;border-radius:3px;background:linear-gradient(#ffffff,#f4f3ee 60%,#e2e0d6);box-shadow:inset 0 -1px 0 #d6d0c0"></div><div class="t" style="left:367px;top:142px;width:76px;text-align:center;font:11px/18px 'Liberation Sans', sans-serif;color:#000">New Row...</div>
<div class="ab" style="left:451px;top:142px;width:44px;height:19px;border:1px solid #1c3c6c;border-radius:3px;background:linear-gradient(#ffffff,#f4f3ee 60%,#e2e0d6);box-shadow:inset 0 -1px 0 #d6d0c0"></div><div class="t" style="left:451px;top:142px;width:44px;text-align:center;font:11px/18px 'Liberation Sans', sans-serif;color:#000">Apply</div>
<div class="ab" style="left:503px;top:142px;width:48px;height:19px;border:1px solid #1c3c6c;border-radius:3px;background:linear-gradient(#ffffff,#f4f3ee 60%,#e2e0d6);box-shadow:inset 0 -1px 0 #d6d0c0"></div><div class="t" style="left:503px;top:142px;width:48px;text-align:center;font:11px/18px 'Liberation Sans', sans-serif;color:#000">Display...</div>
<div class="ab" style="left:560px;top:142px;width:84px;height:19px;border:1px solid #1c3c6c;border-radius:3px;background:linear-gradient(#ffffff,#f4f3ee 60%,#e2e0d6);box-shadow:inset 0 -1px 0 #d6d0c0"></div><div class="t" style="left:560px;top:142px;width:84px;text-align:center;font:11px/18px 'Liberation Sans', sans-serif;color:#000">Delete Property</div>
<div class="t" style="left:651px;top:143px;font:10.4px/18px 'Liberation Sans', sans-serif;color:#000">Filter by:</div>
<div class="ab" style="left:697px;top:141px;width:294px;height:21px;background:#fff;border:1px solid #7f9db9"></div>
<div class="t" style="left:701px;top:144px;font:10.4px/18px 'Liberation Sans', sans-serif;color:#000">&lt; Current properties &gt;</div>
<div class="ab" style="left:974px;top:143px;width:15px;height:17px;background:#c3d3fd;border-radius:1px"></div>
<svg class="ab" style="left:974px;top:143px" width="16" height="17"><path d="M4.5 7 L8 10.5 L11.5 7" stroke="#4d6185" stroke-width="2" fill="none"/></svg>
<div class="ab" style="left:1000px;top:142px;width:45px;height:19px;border:1px solid #1c3c6c;border-radius:3px;background:linear-gradient(#ffffff,#f4f3ee 60%,#e2e0d6);box-shadow:inset 0 -1px 0 #d6d0c0"></div><div class="t" style="left:1000px;top:142px;width:45px;text-align:center;font:11px/18px 'Liberation Sans', sans-serif;color:#000">Help</div>
<div class="ab" style="left:366px;top:164px;width:680px;height:21px;background:#fff;border:1px solid #a8b4bc"></div>
<div class="ab" style="left:354px;top:191px;width:967px;height:20px;background:#ece9d8"></div>
<div class="ab" style="left:481px;top:191px;width:140px;height:20px;background:#c3d3ee"></div>
<div class="t" style="left:481px;top:193px;width:140px;text-align:center;font:bold 11px/16px 'Liberation Sans', sans-serif;color:#000">A</div>
<div class="ab" style="left:621px;top:191px;width:1px;height:20px;background:#9c9a8c"></div>
<div class="t" style="left:621px;top:193px;width:140px;text-align:center;font:bold 11px/16px 'Liberation Sans', sans-serif;color:#000">B</div>
<div class="ab" style="left:761px;top:191px;width:1px;height:20px;background:#9c9a8c"></div>
<div class="t" style="left:761px;top:193px;width:140px;text-align:center;font:bold 11px/16px 'Liberation Sans', sans-serif;color:#000">C</div>
<div class="ab" style="left:901px;top:191px;width:1px;height:20px;background:#9c9a8c"></div>
<div class="t" style="left:901px;top:193px;width:140px;text-align:center;font:bold 11px/16px 'Liberation Sans', sans-serif;color:#000">D</div>
<div class="ab" style="left:1041px;top:191px;width:1px;height:20px;background:#9c9a8c"></div>
<div class="t" style="left:1041px;top:193px;width:140px;text-align:center;font:bold 11px/16px 'Liberation Sans', sans-serif;color:#000">E</div>
<div class="ab" style="left:1181px;top:191px;width:1px;height:20px;background:#9c9a8c"></div>
<div class="t" style="left:1181px;top:193px;width:140px;text-align:center;font:bold 11px/16px 'Liberation Sans', sans-serif;color:#000">F</div>
<div class="ab" style="left:1321px;top:191px;width:1px;height:20px;background:#9c9a8c"></div>
<div class="ab" style="left:354px;top:210px;width:967px;height:1px;background:#8a887a"></div>
<div class="ab" style="left:354px;top:211px;width:127px;height:20px;background:#c3d3ee"></div>
<div class="ab" style="left:481px;top:211px;width:140px;height:20px;background:#000"></div>
<div class="ab" style="left:621px;top:211px;width:700px;height:20px;background:#fff"></div>
<svg class="ab" style="left:488px;top:218px" width="10" height="10"><rect x="0.5" y="0.5" width="9" height="9" fill="#000" stroke="#ccc"/><path d="M2.5 5 H7.5 M5 2.5 V7.5" stroke="#fff" stroke-width="1.2"/></svg>
<div class="t" style="left:507px;top:210px;font:bold 10.5px/16px 'Liberation Sans', sans-serif;color:#fff">SCHEMATIC1 : PAGE1</div>
<svg class="ab" style="left:628px;top:218px" width="10" height="10"><rect x="0.5" y="0.5" width="9" height="9" fill="#ece9d8" stroke="#444"/><path d="M2.5 5 H7.5 M5 2.5 V7.5" stroke="#000" stroke-width="1.2"/></svg>
<div class="t" style="left:647px;top:210px;font:bold 10.5px/16px 'Liberation Sans', sans-serif;color:#000">SCHEMATIC1 : PAGE1</div>
<svg class="ab" style="left:768px;top:218px" width="10" height="10"><rect x="0.5" y="0.5" width="9" height="9" fill="#ece9d8" stroke="#444"/><path d="M2.5 5 H7.5 M5 2.5 V7.5" stroke="#000" stroke-width="1.2"/></svg>
<div class="t" style="left:787px;top:210px;font:bold 10.5px/16px 'Liberation Sans', sans-serif;color:#000">SCHEMATIC1 : PAGE1</div>
<svg class="ab" style="left:908px;top:218px" width="10" height="10"><rect x="0.5" y="0.5" width="9" height="9" fill="#ece9d8" stroke="#444"/><path d="M2.5 5 H7.5 M5 2.5 V7.5" stroke="#000" stroke-width="1.2"/></svg>
<div class="t" style="left:927px;top:210px;font:bold 10.5px/16px 'Liberation Sans', sans-serif;color:#000">SCHEMATIC1 : PAGE1</div>
<svg class="ab" style="left:1048px;top:218px" width="10" height="10"><rect x="0.5" y="0.5" width="9" height="9" fill="#ece9d8" stroke="#444"/><path d="M2.5 5 H7.5 M5 2.5 V7.5" stroke="#000" stroke-width="1.2"/></svg>
<div class="t" style="left:1067px;top:210px;font:bold 10.5px/16px 'Liberation Sans', sans-serif;color:#000">SCHEMATIC1 : PAGE1</div>
<svg class="ab" style="left:1188px;top:218px" width="10" height="10"><rect x="0.5" y="0.5" width="9" height="9" fill="#ece9d8" stroke="#444"/><path d="M2.5 5 H7.5 M5 2.5 V7.5" stroke="#000" stroke-width="1.2"/></svg>
<div class="t" style="left:1207px;top:210px;font:bold 10.5px/16px 'Liberation Sans', sans-serif;color:#000">SCHEMATIC1 : PAGE1</div>
<div class="ab" style="left:354px;top:230px;width:127px;height:1px;background:#8a887a"></div>
<div class="ab" style="left:481px;top:231px;width:840px;height:368px;background:#fff"></div>
<svg class="ab" style="left:0;top:0;width:0;height:0"><defs><pattern id="h" patternUnits="userSpaceOnUse" width="8" height="8"><path d="M-1 9 L9 -1 M-1 1 L1 -1 M7 9 L9 7" stroke="#9c9c9c" stroke-width="1"/></pattern></defs></svg>
<svg class="ab" style="left:0;top:0" width="1331" height="751"><defs><pattern id="h2" patternUnits="userSpaceOnUse" width="8" height="8"><path d="M-1 9 L9 -1 M-1 1 L1 -1 M7 9 L9 7" stroke="#b4b4b4" stroke-width="1"/></pattern></defs><rect x="481" y="247" width="840" height="16" fill="url(#h2)"/><rect x="481" y="263" width="840" height="16" fill="url(#h2)"/><rect x="481" y="311" width="840" height="16" fill="url(#h2)"/><rect x="481" y="567" width="840" height="16" fill="url(#h2)"/><rect x="481" y="583" width="840" height="16" fill="url(#h2)"/></svg>
<div class="t" style="left:354px;top:231px;width:127px;text-align:center;font:bold 11px/16px 'Liberation Sans', sans-serif;letter-spacing:0.3px;color:#000">Color</div>
<div class="ab" style="left:354px;top:247px;width:127px;height:1px;background:#8a887a"></div>
<div class="t" style="left:354px;top:247px;width:127px;text-align:center;font:bold 11px/16px 'Liberation Sans', sans-serif;letter-spacing:0.3px;color:#000">DCC_PN</div>
<div class="ab" style="left:354px;top:263px;width:127px;height:1px;background:#8a887a"></div>
<div class="t" style="left:354px;top:263px;width:127px;text-align:center;font:bold 11px/16px 'Liberation Sans', sans-serif;letter-spacing:0.3px;color:#000">Description</div>
<div class="ab" style="left:354px;top:279px;width:127px;height:1px;background:#8a887a"></div>
<div class="t" style="left:354px;top:279px;width:127px;text-align:center;font:bold 11px/16px 'Liberation Sans', sans-serif;letter-spacing:0.3px;color:#000">Designator</div>
<div class="ab" style="left:354px;top:295px;width:127px;height:1px;background:#8a887a"></div>
<div class="t" style="left:354px;top:295px;width:127px;text-align:center;font:bold 11px/16px 'Liberation Sans', sans-serif;letter-spacing:0.3px;color:#000">Graphic</div>
<div class="ab" style="left:354px;top:311px;width:127px;height:1px;background:#8a887a"></div>
<div class="t" style="left:354px;top:311px;width:127px;text-align:center;font:bold 11px/16px 'Liberation Sans', sans-serif;letter-spacing:0.3px;color:#000">ID</div>
<div class="ab" style="left:354px;top:327px;width:127px;height:1px;background:#8a887a"></div>
<div class="t" style="left:354px;top:327px;width:127px;text-align:center;font:bold 11px/16px 'Liberation Sans', sans-serif;letter-spacing:0.3px;color:#000">Implementation</div>
<div class="ab" style="left:354px;top:343px;width:127px;height:1px;background:#8a887a"></div>
<div class="t" style="left:354px;top:343px;width:127px;text-align:center;font:bold 11px/16px 'Liberation Sans', sans-serif;letter-spacing:0.3px;color:#000">Implementation Path</div>
<div class="ab" style="left:354px;top:359px;width:127px;height:1px;background:#8a887a"></div>
<div class="t" style="left:354px;top:359px;width:127px;text-align:center;font:bold 11px/16px 'Liberation Sans', sans-serif;letter-spacing:0.3px;color:#000">Implementation Type</div>
<div class="ab" style="left:354px;top:375px;width:127px;height:1px;background:#8a887a"></div>
<div class="t" style="left:354px;top:375px;width:127px;text-align:center;font:bold 11px/16px 'Liberation Sans', sans-serif;letter-spacing:0.3px;color:#000">Location X-Coordinate</div>
<div class="ab" style="left:354px;top:391px;width:127px;height:1px;background:#8a887a"></div>
<div class="t" style="left:354px;top:391px;width:127px;text-align:center;font:bold 11px/16px 'Liberation Sans', sans-serif;letter-spacing:0.3px;color:#000">Location Y-Coordinate</div>
<div class="ab" style="left:354px;top:407px;width:127px;height:1px;background:#8a887a"></div>
<div class="t" style="left:354px;top:407px;width:127px;text-align:center;font:bold 11px/16px 'Liberation Sans', sans-serif;letter-spacing:0.3px;color:#000">Name</div>
<div class="ab" style="left:354px;top:423px;width:127px;height:1px;background:#8a887a"></div>
<div class="t" style="left:354px;top:423px;width:127px;text-align:center;font:bold 11px/16px 'Liberation Sans', sans-serif;letter-spacing:0.3px;color:#000">Part Reference</div>
<div class="ab" style="left:354px;top:439px;width:127px;height:1px;background:#8a887a"></div>
<div class="t" style="left:354px;top:439px;width:127px;text-align:center;font:bold 11px/16px 'Liberation Sans', sans-serif;letter-spacing:0.3px;color:#000">PCB Footprint</div>
<div class="ab" style="left:354px;top:455px;width:127px;height:1px;background:#8a887a"></div>
<div class="t" style="left:354px;top:455px;width:127px;text-align:center;font:bold 11px/16px 'Liberation Sans', sans-serif;letter-spacing:0.3px;color:#000">Power Pins Visible</div>
<div class="ab" style="left:354px;top:471px;width:127px;height:1px;background:#8a887a"></div>
<div class="t" style="left:354px;top:471px;width:127px;text-align:center;font:bold 11px/16px 'Liberation Sans', sans-serif;letter-spacing:0.3px;color:#000">Primitive</div>
<div class="ab" style="left:354px;top:487px;width:127px;height:1px;background:#8a887a"></div>
<div class="t" style="left:354px;top:487px;width:127px;text-align:center;font:bold 11px/16px 'Liberation Sans', sans-serif;letter-spacing:0.3px;color:#000">Reference</div>
<div class="ab" style="left:354px;top:503px;width:127px;height:1px;background:#8a887a"></div>
<div class="t" style="left:354px;top:503px;width:127px;text-align:center;font:bold 11px/16px 'Liberation Sans', sans-serif;letter-spacing:0.3px;color:#000">Source Library</div>
<div class="ab" style="left:354px;top:519px;width:127px;height:1px;background:#8a887a"></div>
<div class="t" style="left:354px;top:519px;width:127px;text-align:center;font:bold 11px/16px 'Liberation Sans', sans-serif;letter-spacing:0.3px;color:#000">Source Package</div>
<div class="ab" style="left:354px;top:535px;width:127px;height:1px;background:#8a887a"></div>
<div class="t" style="left:354px;top:535px;width:127px;text-align:center;font:bold 11px/16px 'Liberation Sans', sans-serif;letter-spacing:0.3px;color:#000">Source Part</div>
<div class="ab" style="left:354px;top:551px;width:127px;height:1px;background:#8a887a"></div>
<div class="t" style="left:354px;top:551px;width:127px;text-align:center;font:bold 11px/16px 'Liberation Sans', sans-serif;letter-spacing:0.3px;color:#000">Value</div>
<div class="ab" style="left:354px;top:567px;width:127px;height:1px;background:#8a887a"></div>
<div class="t" style="left:354px;top:567px;width:127px;text-align:center;font:bold 11px/16px 'Liberation Sans', sans-serif;letter-spacing:0.3px;color:#000">Vendor</div>
<div class="ab" style="left:354px;top:583px;width:127px;height:1px;background:#8a887a"></div>
<div class="t" style="left:354px;top:583px;width:127px;text-align:center;font:bold 11px/16px 'Liberation Sans', sans-serif;letter-spacing:0.3px;color:#000">Vendor_PN</div>
<div class="ab" style="left:354px;top:599px;width:127px;height:1px;background:#8a887a"></div>
<div class="ab" style="left:481px;top:191px;width:1px;height:409px;background:#8a887a"></div>
<svg class="ab" style="left:0;top:0" width="1331" height="751"><path d="M481 231.5 H1321M481 247.5 H1321M481 263.5 H1321M481 279.5 H1321M481 295.5 H1321M481 311.5 H1321M481 327.5 H1321M481 343.5 H1321M481 359.5 H1321M481 375.5 H1321M481 391.5 H1321M481 407.5 H1321M481 423.5 H1321M481 439.5 H1321M481 455.5 H1321M481 471.5 H1321M481 487.5 H1321M481 503.5 H1321M481 519.5 H1321M481 535.5 H1321M481 551.5 H1321M481 567.5 H1321M481 583.5 H1321M481 599.5 H1321M621.5 211 V599M761.5 211 V599M901.5 211 V599M1041.5 211 V599M1181.5 211 V599M1321.5 211 V599" stroke="#a0a0a0" stroke-dasharray="1 1"/></svg>
<div class="t" style="left:498px;top:232px;font:10.6px/16px 'Liberation Sans', sans-serif;color:#000">Default</div>
<div class="t" style="left:638px;top:232px;font:10.6px/16px 'Liberation Sans', sans-serif;color:#000">Default</div>
<div class="t" style="left:778px;top:232px;font:10.6px/16px 'Liberation Sans', sans-serif;color:#000">Default</div>
<div class="t" style="left:918px;top:232px;font:10.6px/16px 'Liberation Sans', sans-serif;color:#000">Default</div>
<div class="t" style="left:1058px;top:232px;font:10.6px/16px 'Liberation Sans', sans-serif;color:#000">Default</div>
<div class="t" style="left:1198px;top:232px;font:10.6px/16px 'Liberation Sans', sans-serif;color:#000">Default</div>
<div class="t" style="left:482px;top:247px;width:140px;text-align:center;font:10.6px/16px 'Liberation Sans', sans-serif;color:#000">020-1065M-63B03</div>
<div class="t" style="left:622px;top:247px;width:140px;text-align:center;font:10.6px/16px 'Liberation Sans', sans-serif;color:#000">020-1055K-10B17</div>
<div class="t" style="left:762px;top:247px;width:140px;text-align:center;font:10.6px/16px 'Liberation Sans', sans-serif;color:#000">020-1065K-63B17</div>
<div class="t" style="left:902px;top:247px;width:140px;text-align:center;font:10.6px/16px 'Liberation Sans', sans-serif;color:#000">020-1055K-25B17</div>
<div class="t" style="left:1042px;top:247px;width:140px;text-align:center;font:10.6px/16px 'Liberation Sans', sans-serif;color:#000">020-1055K-63B03</div>
<div class="t" style="left:1182px;top:247px;width:140px;text-align:center;font:10.6px/16px 'Liberation Sans', sans-serif;color:#000">020-2255K-63B17</div>
<div class="t" style="left:485px;top:263px;width:135px;overflow:hidden;font:10.6px/16px 'Liberation Sans', sans-serif;color:#000">ChipCAP_10UF_±20%_X5R</div>
<div class="t" style="left:625px;top:263px;width:135px;overflow:hidden;font:10.6px/16px 'Liberation Sans', sans-serif;color:#000">ChipCAP_1UF_±10%_X5R_</div>
<div class="t" style="left:765px;top:263px;width:135px;overflow:hidden;font:10.6px/16px 'Liberation Sans', sans-serif;color:#000">ChipCAP_10UF_±10%_X5R</div>
<div class="t" style="left:905px;top:263px;width:135px;overflow:hidden;font:10.6px/16px 'Liberation Sans', sans-serif;color:#000">ChipCAP_1UF_±10%_X5R_</div>
<div class="t" style="left:1045px;top:263px;width:135px;overflow:hidden;font:10.6px/16px 'Liberation Sans', sans-serif;color:#000">ChipCAP_1UF_±10%_X5R_</div>
<div class="t" style="left:1185px;top:263px;width:135px;overflow:hidden;font:10.6px/16px 'Liberation Sans', sans-serif;color:#000">ChipCAP_2.2UF_±10%_X5R</div>
<div class="t" style="left:485px;top:295px;width:135px;overflow:hidden;font:10.6px/16px 'Liberation Sans', sans-serif;color:#000">10UF_20%_X5R_6.3V_0.8M</div>
<div class="t" style="left:625px;top:295px;width:135px;overflow:hidden;font:10.6px/16px 'Liberation Sans', sans-serif;color:#000">1UF_10%_X5R_10V_0.8MM</div>
<div class="t" style="left:765px;top:295px;width:135px;overflow:hidden;font:10.6px/16px 'Liberation Sans', sans-serif;color:#000">10UF_20%_X5R_6.3V_0.8M</div>
<div class="t" style="left:905px;top:295px;width:135px;overflow:hidden;font:10.6px/16px 'Liberation Sans', sans-serif;color:#000">1UF_10%_X5R_25V_0.8MM</div>
<div class="t" style="left:1045px;top:295px;width:135px;overflow:hidden;font:10.6px/16px 'Liberation Sans', sans-serif;color:#000">1UF_10%_X5R_6.3V_0.8M</div>
<div class="t" style="left:1185px;top:295px;width:135px;overflow:hidden;font:10.6px/16px 'Liberation Sans', sans-serif;color:#000">2.2UF_10%_X5R_6.3V_0.8</div>
<div class="ab" style="left:603px;top:344px;width:18px;height:15px;background:#ece9d8;border-right:2px solid #8a887a;border-bottom:2px solid #8a887a;border-top:1px solid #fff;border-left:1px solid #fff"></div><div class="t" style="left:603px;top:345px;width:17px;text-align:center;font:10px/14px 'Liberation Sans', sans-serif">...</div>
<div class="ab" style="left:743px;top:344px;width:18px;height:15px;background:#ece9d8;border-right:2px solid #8a887a;border-bottom:2px solid #8a887a;border-top:1px solid #fff;border-left:1px solid #fff"></div><div class="t" style="left:743px;top:345px;width:17px;text-align:center;font:10px/14px 'Liberation Sans', sans-serif">...</div>
<div class="ab" style="left:883px;top:344px;width:18px;height:15px;background:#ece9d8;border-right:2px solid #8a887a;border-bottom:2px solid #8a887a;border-top:1px solid #fff;border-left:1px solid #fff"></div><div class="t" style="left:883px;top:345px;width:17px;text-align:center;font:10px/14px 'Liberation Sans', sans-serif">...</div>
<div class="ab" style="left:1023px;top:344px;width:18px;height:15px;background:#ece9d8;border-right:2px solid #8a887a;border-bottom:2px solid #8a887a;border-top:1px solid #fff;border-left:1px solid #fff"></div><div class="t" style="left:1023px;top:345px;width:17px;text-align:center;font:10px/14px 'Liberation Sans', sans-serif">...</div>
<div class="ab" style="left:1163px;top:344px;width:18px;height:15px;background:#ece9d8;border-right:2px solid #8a887a;border-bottom:2px solid #8a887a;border-top:1px solid #fff;border-left:1px solid #fff"></div><div class="t" style="left:1163px;top:345px;width:17px;text-align:center;font:10px/14px 'Liberation Sans', sans-serif">...</div>
<div class="ab" style="left:1303px;top:344px;width:18px;height:15px;background:#ece9d8;border-right:2px solid #8a887a;border-bottom:2px solid #8a887a;border-top:1px solid #fff;border-left:1px solid #fff"></div><div class="t" style="left:1303px;top:345px;width:17px;text-align:center;font:10px/14px 'Liberation Sans', sans-serif">...</div>
<div class="t" style="left:482px;top:359px;width:140px;text-align:center;font:10.6px/16px 'Liberation Sans', sans-serif;color:#000">&lt;none&gt;</div>
<div class="t" style="left:622px;top:359px;width:140px;text-align:center;font:10.6px/16px 'Liberation Sans', sans-serif;color:#000">&lt;none&gt;</div>
<div class="t" style="left:762px;top:359px;width:140px;text-align:center;font:10.6px/16px 'Liberation Sans', sans-serif;color:#000">&lt;none&gt;</div>
<div class="t" style="left:902px;top:359px;width:140px;text-align:center;font:10.6px/16px 'Liberation Sans', sans-serif;color:#000">&lt;none&gt;</div>
<div class="t" style="left:1042px;top:359px;width:140px;text-align:center;font:10.6px/16px 'Liberation Sans', sans-serif;color:#000">&lt;none&gt;</div>
<div class="t" style="left:1182px;top:359px;width:140px;text-align:center;font:10.6px/16px 'Liberation Sans', sans-serif;color:#000">&lt;none&gt;</div>
<div class="t" style="left:482px;top:375px;width:140px;text-align:center;font:italic 10.9px/16px 'Liberation Sans', sans-serif;color:#747474">50</div>
<div class="t" style="left:622px;top:375px;width:140px;text-align:center;font:italic 10.9px/16px 'Liberation Sans', sans-serif;color:#747474">50</div>
<div class="t" style="left:762px;top:375px;width:140px;text-align:center;font:italic 10.9px/16px 'Liberation Sans', sans-serif;color:#747474">120</div>
<div class="t" style="left:902px;top:375px;width:140px;text-align:center;font:italic 10.9px/16px 'Liberation Sans', sans-serif;color:#747474">120</div>
<div class="t" style="left:1042px;top:375px;width:140px;text-align:center;font:italic 10.9px/16px 'Liberation Sans', sans-serif;color:#747474">50</div>
<div class="t" style="left:1182px;top:375px;width:140px;text-align:center;font:italic 10.9px/16px 'Liberation Sans', sans-serif;color:#747474">120</div>
<div class="t" style="left:482px;top:391px;width:140px;text-align:center;font:italic 10.9px/16px 'Liberation Sans', sans-serif;color:#747474">50</div>
<div class="t" style="left:622px;top:391px;width:140px;text-align:center;font:italic 10.9px/16px 'Liberation Sans', sans-serif;color:#747474">100</div>
<div class="t" style="left:762px;top:391px;width:140px;text-align:center;font:italic 10.9px/16px 'Liberation Sans', sans-serif;color:#747474">50</div>
<div class="t" style="left:902px;top:391px;width:140px;text-align:center;font:italic 10.9px/16px 'Liberation Sans', sans-serif;color:#747474">100</div>
<div class="t" style="left:1042px;top:391px;width:140px;text-align:center;font:italic 10.9px/16px 'Liberation Sans', sans-serif;color:#747474">150</div>
<div class="t" style="left:1182px;top:391px;width:140px;text-align:center;font:italic 10.9px/16px 'Liberation Sans', sans-serif;color:#747474">150</div>
<div class="t" style="left:482px;top:407px;width:140px;text-align:center;font:italic 10.9px/16px 'Liberation Sans', sans-serif;color:#747474">INS26</div>
<div class="t" style="left:622px;top:407px;width:140px;text-align:center;font:italic 10.9px/16px 'Liberation Sans', sans-serif;color:#747474">INS51</div>
<div class="t" style="left:762px;top:407px;width:140px;text-align:center;font:italic 10.9px/16px 'Liberation Sans', sans-serif;color:#747474">INS76</div>
<div class="t" style="left:902px;top:407px;width:140px;text-align:center;font:italic 10.9px/16px 'Liberation Sans', sans-serif;color:#747474">INS101</div>
<div class="t" style="left:1042px;top:407px;width:140px;text-align:center;font:italic 10.9px/16px 'Liberation Sans', sans-serif;color:#747474">INS126</div>
<div class="t" style="left:1182px;top:407px;width:140px;text-align:center;font:italic 10.9px/16px 'Liberation Sans', sans-serif;color:#747474">INS151</div>
<div class="t" style="left:482px;top:423px;width:140px;text-align:center;font:10.6px/16px 'Liberation Sans', sans-serif;color:#000">C1</div>
<div class="t" style="left:622px;top:423px;width:140px;text-align:center;font:10.6px/16px 'Liberation Sans', sans-serif;color:#000">C2</div>
<div class="t" style="left:762px;top:423px;width:140px;text-align:center;font:10.6px/16px 'Liberation Sans', sans-serif;color:#000">C3</div>
<div class="t" style="left:902px;top:423px;width:140px;text-align:center;font:10.6px/16px 'Liberation Sans', sans-serif;color:#000">C4</div>
<div class="t" style="left:1042px;top:423px;width:140px;text-align:center;font:10.6px/16px 'Liberation Sans', sans-serif;color:#000">C5</div>
<div class="t" style="left:1182px;top:423px;width:140px;text-align:center;font:10.6px/16px 'Liberation Sans', sans-serif;color:#000">C6</div>
<div class="t" style="left:482px;top:439px;width:140px;text-align:center;font:10.6px/16px 'Liberation Sans', sans-serif;color:#000">C0603</div>
<div class="t" style="left:622px;top:439px;width:140px;text-align:center;font:10.6px/16px 'Liberation Sans', sans-serif;color:#000">C0603</div>
<div class="t" style="left:762px;top:439px;width:140px;text-align:center;font:10.6px/16px 'Liberation Sans', sans-serif;color:#000">C0603</div>
<div class="t" style="left:902px;top:439px;width:140px;text-align:center;font:10.6px/16px 'Liberation Sans', sans-serif;color:#000">C0603</div>
<div class="t" style="left:1042px;top:439px;width:140px;text-align:center;font:10.6px/16px 'Liberation Sans', sans-serif;color:#000">C0603</div>
<div class="t" style="left:1182px;top:439px;width:140px;text-align:center;font:10.6px/16px 'Liberation Sans', sans-serif;color:#000">C0603</div>
<div class="ab" style="left:545px;top:458px;width:12px;height:12px;border-top:2px solid #222;border-left:2px solid #222;border-right:1px solid #e4e2da;border-bottom:1px solid #e4e2da;background:#fff"></div>
<div class="ab" style="left:685px;top:458px;width:12px;height:12px;border-top:2px solid #222;border-left:2px solid #222;border-right:1px solid #e4e2da;border-bottom:1px solid #e4e2da;background:#fff"></div>
<div class="ab" style="left:825px;top:458px;width:12px;height:12px;border-top:2px solid #222;border-left:2px solid #222;border-right:1px solid #e4e2da;border-bottom:1px solid #e4e2da;background:#fff"></div>
<div class="ab" style="left:965px;top:458px;width:12px;height:12px;border-top:2px solid #222;border-left:2px solid #222;border-right:1px solid #e4e2da;border-bottom:1px solid #e4e2da;background:#fff"></div>
<div class="ab" style="left:1105px;top:458px;width:12px;height:12px;border-top:2px solid #222;border-left:2px solid #222;border-right:1px solid #e4e2da;border-bottom:1px solid #e4e2da;background:#fff"></div>
<div class="ab" style="left:1245px;top:458px;width:12px;height:12px;border-top:2px solid #222;border-left:2px solid #222;border-right:1px solid #e4e2da;border-bottom:1px solid #e4e2da;background:#fff"></div>
<div class="t" style="left:482px;top:471px;width:140px;text-align:center;font:10.6px/16px 'Liberation Sans', sans-serif;color:#000">DEFAULT</div>
<div class="t" style="left:622px;top:471px;width:140px;text-align:center;font:10.6px/16px 'Liberation Sans', sans-serif;color:#000">DEFAULT</div>
<div class="t" style="left:762px;top:471px;width:140px;text-align:center;font:10.6px/16px 'Liberation Sans', sans-serif;color:#000">DEFAULT</div>
<div class="t" style="left:902px;top:471px;width:140px;text-align:center;font:10.6px/16px 'Liberation Sans', sans-serif;color:#000">DEFAULT</div>
<div class="t" style="left:1042px;top:471px;width:140px;text-align:center;font:10.6px/16px 'Liberation Sans', sans-serif;color:#000">DEFAULT</div>
<div class="t" style="left:1182px;top:471px;width:140px;text-align:center;font:10.6px/16px 'Liberation Sans', sans-serif;color:#000">DEFAULT</div>
<div class="t" style="left:482px;top:487px;width:140px;text-align:center;font:10.6px/16px 'Liberation Sans', sans-serif;color:#000">C1</div>
<div class="t" style="left:622px;top:487px;width:140px;text-align:center;font:10.6px/16px 'Liberation Sans', sans-serif;color:#000">C2</div>
<div class="t" style="left:762px;top:487px;width:140px;text-align:center;font:10.6px/16px 'Liberation Sans', sans-serif;color:#000">C3</div>
<div class="t" style="left:902px;top:487px;width:140px;text-align:center;font:10.6px/16px 'Liberation Sans', sans-serif;color:#000">C4</div>
<div class="t" style="left:1042px;top:487px;width:140px;text-align:center;font:10.6px/16px 'Liberation Sans', sans-serif;color:#000">C5</div>
<div class="t" style="left:1182px;top:487px;width:140px;text-align:center;font:10.6px/16px 'Liberation Sans', sans-serif;color:#000">C6</div>
<div class="t" style="left:486px;top:503px;width:116px;overflow:hidden;font:italic 10.9px/16px 'Liberation Sans', sans-serif;color:#747474">E:\ORTOOLS\ORCAD\</div>
<div class="ab" style="left:603px;top:504px;width:18px;height:15px;background:#ece9d8;border-right:2px solid #8a887a;border-bottom:2px solid #8a887a;border-top:1px solid #fff;border-left:1px solid #fff"></div><div class="t" style="left:603px;top:505px;width:17px;text-align:center;font:10px/14px 'Liberation Sans', sans-serif">...</div>
<div class="t" style="left:626px;top:503px;width:116px;overflow:hidden;font:italic 10.9px/16px 'Liberation Sans', sans-serif;color:#747474">E:\ORTOOLS\ORCAD\</div>
<div class="ab" style="left:743px;top:504px;width:18px;height:15px;background:#ece9d8;border-right:2px solid #8a887a;border-bottom:2px solid #8a887a;border-top:1px solid #fff;border-left:1px solid #fff"></div><div class="t" style="left:743px;top:505px;width:17px;text-align:center;font:10px/14px 'Liberation Sans', sans-serif">...</div>
<div class="t" style="left:766px;top:503px;width:116px;overflow:hidden;font:italic 10.9px/16px 'Liberation Sans', sans-serif;color:#747474">E:\ORTOOLS\ORCAD\</div>
<div class="ab" style="left:883px;top:504px;width:18px;height:15px;background:#ece9d8;border-right:2px solid #8a887a;border-bottom:2px solid #8a887a;border-top:1px solid #fff;border-left:1px solid #fff"></div><div class="t" style="left:883px;top:505px;width:17px;text-align:center;font:10px/14px 'Liberation Sans', sans-serif">...</div>
<div class="t" style="left:906px;top:503px;width:116px;overflow:hidden;font:italic 10.9px/16px 'Liberation Sans', sans-serif;color:#747474">E:\ORTOOLS\ORCAD\</div>
<div class="ab" style="left:1023px;top:504px;width:18px;height:15px;background:#ece9d8;border-right:2px solid #8a887a;border-bottom:2px solid #8a887a;border-top:1px solid #fff;border-left:1px solid #fff"></div><div class="t" style="left:1023px;top:505px;width:17px;text-align:center;font:10px/14px 'Liberation Sans', sans-serif">...</div>
<div class="t" style="left:1046px;top:503px;width:116px;overflow:hidden;font:italic 10.9px/16px 'Liberation Sans', sans-serif;color:#747474">E:\ORTOOLS\ORCAD\</div>
<div class="ab" style="left:1163px;top:504px;width:18px;height:15px;background:#ece9d8;border-right:2px solid #8a887a;border-bottom:2px solid #8a887a;border-top:1px solid #fff;border-left:1px solid #fff"></div><div class="t" style="left:1163px;top:505px;width:17px;text-align:center;font:10px/14px 'Liberation Sans', sans-serif">...</div>
<div class="t" style="left:1186px;top:503px;width:116px;overflow:hidden;font:italic 10.9px/16px 'Liberation Sans', sans-serif;color:#747474">E:\ORTOOLS\ORCAD\</div>
<div class="ab" style="left:1303px;top:504px;width:18px;height:15px;background:#ece9d8;border-right:2px solid #8a887a;border-bottom:2px solid #8a887a;border-top:1px solid #fff;border-left:1px solid #fff"></div><div class="t" style="left:1303px;top:505px;width:17px;text-align:center;font:10px/14px 'Liberation Sans', sans-serif">...</div>
<div class="t" style="left:487px;top:519px;width:133px;overflow:hidden;font:italic 10.9px/16px 'Liberation Sans', sans-serif;color:#747474">10UF_20%_X5R_6.3V_0.8</div>
<div class="t" style="left:627px;top:519px;width:133px;overflow:hidden;font:italic 10.9px/16px 'Liberation Sans', sans-serif;color:#747474">1UF_10%_X5R_10V_0.8M</div>
<div class="t" style="left:767px;top:519px;width:133px;overflow:hidden;font:italic 10.9px/16px 'Liberation Sans', sans-serif;color:#747474">10UF_20%_X5R_6.3V_0.8</div>
<div class="t" style="left:907px;top:519px;width:133px;overflow:hidden;font:italic 10.9px/16px 'Liberation Sans', sans-serif;color:#747474">1UF_10%_X5R_25V_0.8M</div>
<div class="t" style="left:1047px;top:519px;width:133px;overflow:hidden;font:italic 10.9px/16px 'Liberation Sans', sans-serif;color:#747474">1UF_10%_X5R_6.3V_0.8M</div>
<div class="t" style="left:1187px;top:519px;width:133px;overflow:hidden;font:italic 10.9px/16px 'Liberation Sans', sans-serif;color:#747474">2.2UF_10%_X5R_6.3V_0.8</div>
<div class="t" style="left:487px;top:535px;width:133px;overflow:hidden;font:italic 10.9px/16px 'Liberation Sans', sans-serif;color:#747474">10UF_20%_X5R_6.3V_0.8</div>
<div class="t" style="left:627px;top:535px;width:133px;overflow:hidden;font:italic 10.9px/16px 'Liberation Sans', sans-serif;color:#747474">1UF_10%_X5R_10V_0.8M</div>
<div class="t" style="left:767px;top:535px;width:133px;overflow:hidden;font:italic 10.9px/16px 'Liberation Sans', sans-serif;color:#747474">10UF_20%_X5R_6.3V_0.8</div>
<div class="t" style="left:907px;top:535px;width:133px;overflow:hidden;font:italic 10.9px/16px 'Liberation Sans', sans-serif;color:#747474">1UF_10%_X5R_25V_0.8M</div>
<div class="t" style="left:1047px;top:535px;width:133px;overflow:hidden;font:italic 10.9px/16px 'Liberation Sans', sans-serif;color:#747474">1UF_10%_X5R_6.3V_0.8M</div>
<div class="t" style="left:1187px;top:535px;width:133px;overflow:hidden;font:italic 10.9px/16px 'Liberation Sans', sans-serif;color:#747474">2.2UF_10%_X5R_6.3V_0.8</div>
<div class="t" style="left:482px;top:551px;width:140px;text-align:center;font:10.6px/16px 'Liberation Sans', sans-serif;color:#000">10UF</div>
<div class="t" style="left:622px;top:551px;width:140px;text-align:center;font:10.6px/16px 'Liberation Sans', sans-serif;color:#000">1UF</div>
<div class="t" style="left:762px;top:551px;width:140px;text-align:center;font:10.6px/16px 'Liberation Sans', sans-serif;color:#000">10UF</div>
<div class="t" style="left:902px;top:551px;width:140px;text-align:center;font:10.6px/16px 'Liberation Sans', sans-serif;color:#000">1UF</div>
<div class="t" style="left:1042px;top:551px;width:140px;text-align:center;font:10.6px/16px 'Liberation Sans', sans-serif;color:#000">1UF</div>
<div class="t" style="left:1182px;top:551px;width:140px;text-align:center;font:10.6px/16px 'Liberation Sans', sans-serif;color:#000">2.2UF</div>
<div class="t" style="left:482px;top:567px;width:140px;text-align:center;font:10.6px/16px 'Liberation Sans', sans-serif;color:#000">PANASONIC</div>
<div class="t" style="left:622px;top:567px;width:140px;text-align:center;font:10.6px/16px 'Liberation Sans', sans-serif;color:#000">TaiyoYuden</div>
<div class="t" style="left:762px;top:567px;width:140px;text-align:center;font:10.6px/16px 'Liberation Sans', sans-serif;color:#000">TaiyoYuden</div>
<div class="t" style="left:902px;top:567px;width:140px;text-align:center;font:10.6px/16px 'Liberation Sans', sans-serif;color:#000">TaiyoYuden</div>
<div class="t" style="left:1042px;top:567px;width:140px;text-align:center;font:10.6px/16px 'Liberation Sans', sans-serif;color:#000">PANASONIC</div>
<div class="t" style="left:1182px;top:567px;width:140px;text-align:center;font:10.6px/16px 'Liberation Sans', sans-serif;color:#000">TaiyoYuden</div>
<div class="t" style="left:482px;top:583px;width:140px;text-align:center;font:10.6px/16px 'Liberation Sans', sans-serif;color:#000">ECJ1VB0J106M</div>
<div class="t" style="left:622px;top:583px;width:140px;text-align:center;font:10.6px/16px 'Liberation Sans', sans-serif;color:#000">LMK107BJ105KA</div>
<div class="t" style="left:762px;top:583px;width:140px;text-align:center;font:10.6px/16px 'Liberation Sans', sans-serif;color:#000">JMK107BJ106MA</div>
<div class="t" style="left:902px;top:583px;width:140px;text-align:center;font:10.6px/16px 'Liberation Sans', sans-serif;color:#000">TMK107BJ105KA</div>
<div class="t" style="left:1042px;top:583px;width:140px;text-align:center;font:10.6px/16px 'Liberation Sans', sans-serif;color:#000">ECJ1VB0J105K</div>
<div class="t" style="left:1182px;top:583px;width:140px;text-align:center;font:10.6px/16px 'Liberation Sans', sans-serif;color:#000">JMK107BJ225KA</div>
<div class="t" style="left:612.5px;top:359.3px;font:bold 32px/32px 'Liberation Sans', sans-serif;color:rgba(170,170,170,0.3);transform:scaleX(0.92);transform-origin:0 0">Discuz!</div>
<div class="ab" style="left:360px;top:244px;width:967px;height:39px;border:1.5px solid #c84848"></div>
<div class="ab" style="left:356px;top:437px;width:969px;height:21px;border:1.5px solid #c84848"></div>
<div class="ab" style="left:359px;top:551px;width:960px;height:46px;border:1.5px solid #c84848"></div>
<svg class="ab" style="left:0;top:0" width="400" height="440"><path d="M238 418 L374 300 M374 300 L344 310 M374 300 L358 328 M238 418 L250 398 M238 418 L277 406" stroke="#e01818" stroke-width="3.5" stroke-linecap="round" fill="none"/></svg>
</body></html>
